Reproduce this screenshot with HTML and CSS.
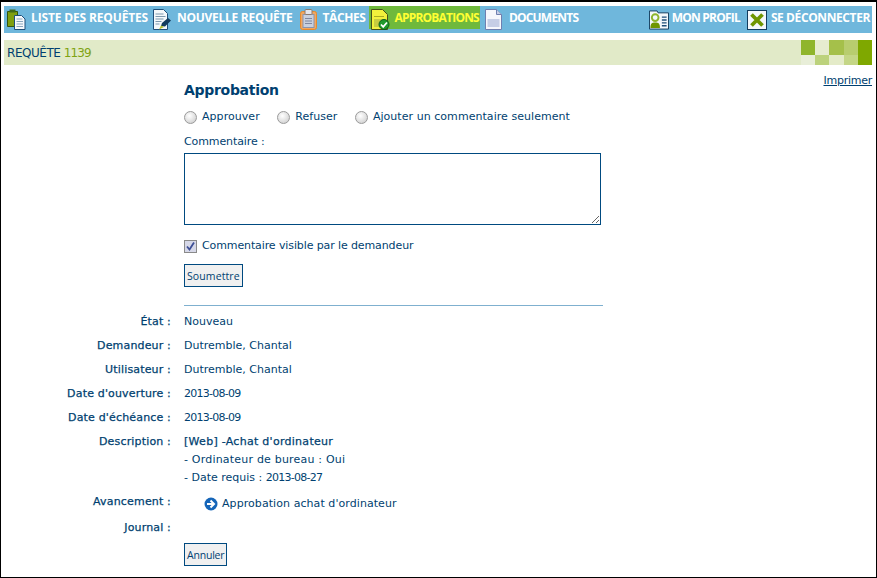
FILE: index.html
```html
<!DOCTYPE html>
<html lang="fr">
<head>
<meta charset="utf-8">
<title>Requête 1139</title>
<link rel="stylesheet" href="styles.css">
</head>
<body>
<div class="frame">
  <nav class="nav">
    <a class="nav-item"><svg class="ico" viewBox="0 0 19 21"><path d="M.5 2.500h10v15h-10z" fill="#7f9f10" stroke="#33550f"/><path d="M2.500 .5h6v3h-6z" fill="#3f6a1a"/><path d="M7.500 6.500h7l3.500 3.500v10.500H7.500z" fill="#f6f9fc" stroke="#1f4f7a"/><path d="M9.500 10h6M9.500 12.500h6.500M9.500 15h6.500M9.500 17.500h6.500" stroke="#8aa6bd"/></svg>LISTE DES REQUÊTES</a>
    <a class="nav-item nav-new"><svg class="ico" viewBox="0 0 19 21"><path d="M.5 .5h10l4 4v16H.5z" fill="#f4f8fb" stroke="#1f4f7a"/><path d="M2.500 5h8M2.500 7.500h10M2.500 10h8M2.500 12.500h6M2.500 15h4" stroke="#7d98ad"/><path d="M8 17l1-3 6-5 3 2.500-6 6z" fill="#123c5e"/><path d="M6 20.500l2-4 3 1.500z" fill="#b5c22a"/></svg>NOUVELLE REQUÊTE</a>
    <a class="nav-item nav-tasks"><svg class="ico" viewBox="0 0 19 21"><rect x=".5" y="2.500" width="16" height="18" rx="2" fill="#f2a75e" stroke="#e58a2c"/><rect x="3" y="5.500" width="11" height="13" fill="#c8d0de" stroke="#8a94ac"/><rect x="5" y=".5" width="7" height="5" rx="1" fill="#e4e6ec" stroke="#8a7a70"/><path d="M5 9.500h7M5 12h7M5 14.500h7" stroke="#7f88a0"/></svg>TÂCHES</a>
    <a class="nav-item nav-active nav-tight"><svg class="ico" viewBox="0 0 19 21"><path d="M.5 .5h11l5 5v15H.5z" fill="#f2f03c" stroke="#46501a"/><path d="M3 10h10v8H3z" fill="#c8cc40"/><path d="M3 7.500h10" stroke="#a8ac20"/><circle cx="13" cy="15.500" r="5" fill="#1f9a2c" stroke="#0f5f1c"/><path d="M10 15.500l2.200 2.300 3.800-4.300" fill="none" stroke="#fff" stroke-width="1.800"/></svg>APPROBATIONS</a>
    <a class="nav-item nav-tight nav-docs"><svg class="ico" viewBox="0 0 19 21"><path d="M.5 .5h11l5 5v15H.5z" fill="#f6f7fc" stroke="#6f7fb0"/><path d="M11.500 .5v5h5" fill="#c6cee6" stroke="#6f7fb0"/><rect x="2.500" y="10" width="12" height="8" fill="#c6cee6"/></svg>DOCUMENTS</a>
    <span class="nav-spacer"></span>
    <a class="nav-item nav-tight"><svg class="ico ico-profile" viewBox="0 0 21 20"><path d="M.5 .5h8l1 2h11v17H.5z" fill="#f4f8fb" stroke="#123c5e"/><circle cx="6.500" cy="7.500" r="3.500" fill="none" stroke="#8fb52c" stroke-width="2"/><path d="M1.500 18.500c0-5 1.500-6 5-6s5 1 5 6z" fill="#6f9600"/><path d="M13.500 7h5M13.500 10h5M13.500 13h5M13.500 16h5" stroke="#1f4f7a" stroke-width="1.500"/></svg>MON PROFIL</a>
    <a class="nav-item nav-logout"><svg class="ico ico-logout" viewBox="0 0 20 20"><rect x=".5" y=".5" width="19" height="19" fill="#f4f8fb" stroke="#123c5e"/><path d="M4.500 4.500l11 11M15.500 4.500l-11 11" stroke="#6f9600" stroke-width="3.800"/></svg>SE DÉCONNECTER</a>
  </nav>

  <header class="band">
    <h1 class="band-title">REQUÊTE <span class="band-num">1139</span></h1>
    <div class="checks">
      <i class="c c1"></i><i class="c c2"></i><i class="c c3"></i><i class="c c4"></i><i class="c c5"></i>
      <i class="c c6"></i><i class="c c7"></i><i class="c c8"></i><i class="c c9"></i>
    </div>
  </header>

  <a class="print">Imprimer</a>

  <main class="form">
    <h2 class="title">Approbation</h2>
    <div class="radios">
      <label class="radio"><span class="radio-dot"></span>Approuver</label>
      <label class="radio"><span class="radio-dot"></span>Refuser</label>
      <label class="radio"><span class="radio-dot"></span>Ajouter un commentaire seulement</label>
    </div>
    <div class="field-label">Commentaire :</div>
    <textarea class="comment"></textarea>
    <label class="check-row"><span class="checkbox"><svg viewBox="0 0 9 9" class="tick"><path d="M1 4.500l2.500 3L8 .5" fill="none" stroke="#3d4f96" stroke-width="1.800"/></svg></span>Commentaire visible par le demandeur</label>
    <button class="btn" type="button">Soumettre</button>
    <hr class="rule">
  </main>

  <dl class="details">
    <dt>État :</dt><dd>Nouveau</dd>
    <dt>Demandeur :</dt><dd>Dutremble, Chantal</dd>
    <dt>Utilisateur :</dt><dd>Dutremble, Chantal</dd>
    <dt>Date d'ouverture :</dt><dd class="date">2013-08-09</dd>
    <dt>Date d'échéance :</dt><dd class="date">2013-08-09</dd>
    <dt>Description :</dt><dd class="desc"><div class="desc-head">[Web] -Achat d'ordinateur</div><div class="desc-line">- Ordinateur de bureau : Oui</div><div>- Date requis : <span class="date">2013-08-27</span></div></dd>
    <dt>Avancement :</dt><dd class="progress"><svg class="arrow" viewBox="0 0 14 14"><circle cx="7" cy="7" r="6.500" fill="#1565b8"/><path d="M3 7h6M6.500 3.500L10 7l-3.500 3.500" fill="none" stroke="#fff" stroke-width="2"/></svg>Approbation achat d'ordinateur</dd>
    <dt class="journal">Journal :</dt><dd></dd>
  </dl>
  <div class="actions"><button class="btn btn-cancel" type="button">Annuler</button></div>
</div>
</body>
</html>
```
FILE: styles.css
```css
* { box-sizing: border-box; }
html, body { margin: 0; padding: 0; }
body { width: 877px; height: 578px; overflow: hidden; background: #fff; }
.frame {
  width: 877px; height: 578px; overflow: hidden;
  border: 1px solid #000; border-top-width: 2px;
  padding: 4px 4px 0 3px;
  font: 11px/16px "DejaVu Sans", Verdana, sans-serif;
  color: #003f70;
  background: #fff;
}
.nav {
  display: flex; align-items: flex-start; height: 27px;
  background: #6fb7dc; color: #fff;
  font: bold 12px/16px "Open Sans", Tahoma, sans-serif;
}
.nav-item { display: flex; align-items: center; height: 23px; white-space: nowrap; padding: 0 2px 0 3px; letter-spacing: -.15px; }
.nav-new { letter-spacing: -.28px; padding-right: 4px; }
.nav-tasks { letter-spacing: -.4px; padding-right: 3px; }
.nav-tasks .ico { margin-right: 4px; }
.nav-tight { letter-spacing: -.8px; }
.nav-active { background: #6fb93c; color: #ffff33; padding: 0 1px 0 2px; margin-right: 2px; }
.nav-spacer { flex: 1; }
.nav-logout { margin-left: 2px; letter-spacing: -.4px; }
.ico { width: 19px; height: 21px; flex: none; margin: 4px 5px 0 0; }
.ico-profile { width: 20px; height: 20px; margin-right: 3px; }
.ico-logout { width: 20px; height: 20px; margin-right: 4px; }
.band {
  display: flex; justify-content: space-between; height: 25px; margin-top: 7px;
  background: #e1eac8;
}
.band-title { margin: 0; padding: 5px 0 0 3px; font: 12px/16px "DejaVu Sans", sans-serif; letter-spacing: -.45px; color: #003f70; }
.band-num { color: #7fa312; letter-spacing: -.9px; }
.checks { display: grid; grid-template-columns: repeat(5, 14.200px); grid-template-rows: 15px 10px; }
.c5 { grid-row: 1 / span 2; grid-column: 5; }
.c { display: block; }
.c1 { background: #8fb52c; } .c2 { background: #e6ecd0; } .c3 { background: #a5c04a; }
.c4 { background: #b8cd6e; } .c5 { background: #7fa800; }
.c6 { background: #e8eed8; } .c7 { background: #bcd27c; } .c8 { background: #e4ebc8; } .c9 { background: #c4d686; }
.print { float: right; margin-top: 8px; text-decoration: underline; line-height: 15px; letter-spacing: -.25px; }
.form { margin-left: 180px; width: 419px; padding-top: 15px; }
.title { margin: 0; font: bold 14px/20px "DejaVu Sans", sans-serif; letter-spacing: -.3px; color: #003f70; }
.radios { display: flex; margin-top: 9px; height: 16px; letter-spacing: .05px; }
.radio { display: flex; align-items: center; margin-right: 17.500px; }
.radio-dot {
  width: 13px; height: 13px; border-radius: 50%; margin-right: 5px; flex: none;
  border: 1px solid #9a9a9a;
  background: radial-gradient(circle at 40% 35%, #fff, #d8d8d8 70%, #c0c0c0);
}
.field-label { margin-top: 9px; letter-spacing: -.1px; }
.comment {
  display: block; width: 417px; height: 72px; margin-top: 3px; resize: both;
  border: 1px solid #004a80; background: #fff; padding: 2px; outline: 0;
}
.check-row { display: flex; align-items: center; margin-top: 13px; height: 16px; letter-spacing: -.11px; }
.checkbox {
  width: 13px; height: 13px; margin-right: 5px; flex: none; border: 1px solid #8a8a8a;
  background: #d6d8e8; display: flex; align-items: center; justify-content: center;
}
.tick { width: 9px; height: 9px; }
.btn {
  display: block; height: 23px; padding: 0 2px; margin: 0;
  border: 1px solid #004a80; background: #f0f0f0; color: #003f70;
  font: 10.500px/16px "Open Sans", Tahoma, sans-serif; letter-spacing: .1px;
}
.btn-cancel { letter-spacing: -.2px; }
.form .btn { margin-top: 10px; }
.rule { border: 0; border-top: 1px solid #7fb0cf; margin: 18px 0 0; width: 419px; }
.details {
  display: grid; grid-template-columns: 167px 1fr; column-gap: 13px; row-gap: 8px; margin: 8px 0 0;
}
.details dt { text-align: right; font-weight: normal; letter-spacing: .17px; -webkit-text-stroke: .25px #003f70; }
.details dd { margin: 0; min-height: 16px; }
.date { letter-spacing: -.75px; }
.desc { line-height: 18px; margin-top: -1px !important; margin-bottom: -1px !important; }
.desc-head { letter-spacing: .28px; -webkit-text-stroke: .25px #003f70; }
.desc-line { letter-spacing: .2px; }
.progress { display: flex; align-items: center; padding-left: 20px; position: relative; top: 2px; letter-spacing: .07px; }
.arrow { width: 14px; height: 14px; margin-right: 4px; flex: none; }
.journal { position: relative; top: 2px; }
.actions { padding: 9px 0 0 180px; }
```
